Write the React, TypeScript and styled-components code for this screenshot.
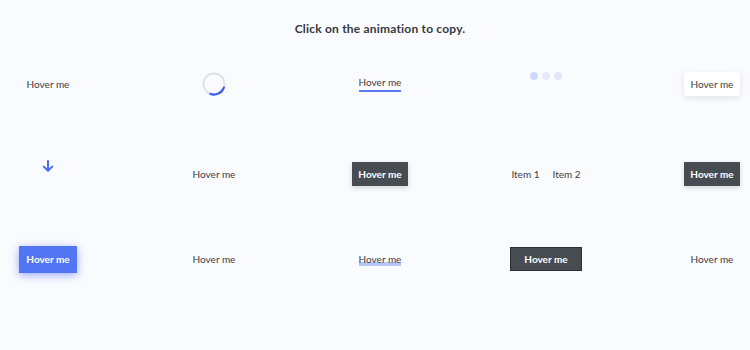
import React from "react";
import styled, { createGlobalStyle } from "styled-components";

const Global = createGlobalStyle`
  html, body { margin: 0; padding: 0; background: #fafbfe; overflow: hidden; }
  body { font-family: "Lato", "Liberation Sans", sans-serif; color: #3b4046; }
`;

const Page = styled.div`
  width: 760px;
  height: 350px;
`;

const Title = styled.h1`
  margin: 0;
  padding-top: 21px;
  font-size: 12px;
  line-height: 16px;
  font-weight: 700;
  letter-spacing: 0.2px;
  text-align: center;
  color: #34393f;
`;

const Grid = styled.div`
  margin-top: 17px;
  display: grid;
  grid-template-columns: repeat(5, 96px);
  column-gap: 70px;
  grid-template-rows: 60px 120px 50px;
`;

const Cell = styled.div`
  display: flex;
  align-items: center;
  justify-content: center;
`;

const Label = styled.span`
  font-size: 10px;
  line-height: 13px;
  color: #3b4046;
`;

const Underlined = styled(Label)<{ $soft?: boolean }>`
  padding-bottom: 1px;
  border-bottom: 2px solid #5b7cf3;
`;

const Highlight = styled(Label)`
  background: linear-gradient(to top, #b7c6f7 0 4px, transparent 4px);
`;

const Button = styled.div<{ $variant: "white" | "dark" | "blue" | "outlined" }>`
  display: flex;
  align-items: center;
  justify-content: center;
  box-sizing: border-box;
  font-size: 10px;
  font-weight: ${(p) => (p.$variant === "white" ? 400 : 700)};
  color: ${(p) => (p.$variant === "white" ? "#3b4046" : "#ffffff")};
  background: ${(p) =>
    p.$variant === "white" ? "#ffffff" : p.$variant === "blue" ? "#5275f3" : "#464c51"};
  border-radius: ${(p) => (p.$variant === "white" ? "3px" : "0")};
  border: ${(p) => (p.$variant === "outlined" ? "1px solid #2d3135" : "none")};
  height: ${(p) => (p.$variant === "blue" ? "27px" : "24px")};
  width: ${(p) => (p.$variant === "blue" ? "58px" : p.$variant === "outlined" ? "72px" : "56px")};
  box-shadow: ${(p) =>
    p.$variant === "white"
      ? "0 2px 6px rgba(40,50,80,0.12)"
      : p.$variant === "blue"
      ? "0 2px 9px rgba(70,100,240,0.55)"
      : p.$variant === "dark"
      ? "0 2px 5px rgba(0,0,0,0.15)"
      : "none"};
`;

const Dots = styled.div`
  display: flex;
  gap: 4px;
  margin-top: -17px;
`;

const Dot = styled.span<{ $c: string }>`
  width: 8px;
  height: 8px;
  border-radius: 50%;
  background: ${(p) => p.$c};
`;

const Items = styled.div`
  display: flex;
  gap: 13px;
`;

const ArrowWrap = styled.div`
  margin-top: -16px;
  display: flex;
`;

const Spinner = () => (
  <svg width="24" height="24" viewBox="0 0 24 24">
    <circle cx="12" cy="12" r="10.5" fill="none" stroke="#e1e2e6" strokeWidth="2" />
    <path d="M21.87 15.6 A10.5 10.5 0 0 1 8.4 21.87" fill="none" stroke="#3f63f0" strokeWidth="2.2" strokeLinecap="round" />
  </svg>
);

const Arrow = () => (
  <svg width="12" height="12" viewBox="0 0 12 12">
    <path d="M6 1 V10.5 M1.8 6.6 L6 10.8 L10.2 6.6" fill="none" stroke="#4a6cf4" strokeWidth="2" strokeLinecap="round" strokeLinejoin="round" />
  </svg>
);

export default function App() {
  return (
    <Page>
      <Global />
      <Title>Click on the animation to copy.</Title>
      <Grid>
        <Cell><Label>Hover me</Label></Cell>
        <Cell><Spinner /></Cell>
        <Cell><Underlined>Hover me</Underlined></Cell>
        <Cell>
          <Dots>
            <Dot $c="#cfd9f7" />
            <Dot $c="#e6ebfa" />
            <Dot $c="#e1e7fa" />
          </Dots>
        </Cell>
        <Cell><Button $variant="white">Hover me</Button></Cell>

        <Cell><ArrowWrap><Arrow /></ArrowWrap></Cell>
        <Cell><Label>Hover me</Label></Cell>
        <Cell><Button $variant="dark">Hover me</Button></Cell>
        <Cell>
          <Items>
            <Label>Item 1</Label>
            <Label>Item 2</Label>
          </Items>
        </Cell>
        <Cell><Button $variant="dark">Hover me</Button></Cell>

        <Cell><Button $variant="blue">Hover me</Button></Cell>
        <Cell><Label>Hover me</Label></Cell>
        <Cell><Highlight>Hover me</Highlight></Cell>
        <Cell><Button $variant="outlined">Hover me</Button></Cell>
        <Cell><Label>Hover me</Label></Cell>
      </Grid>
    </Page>
  );
}
